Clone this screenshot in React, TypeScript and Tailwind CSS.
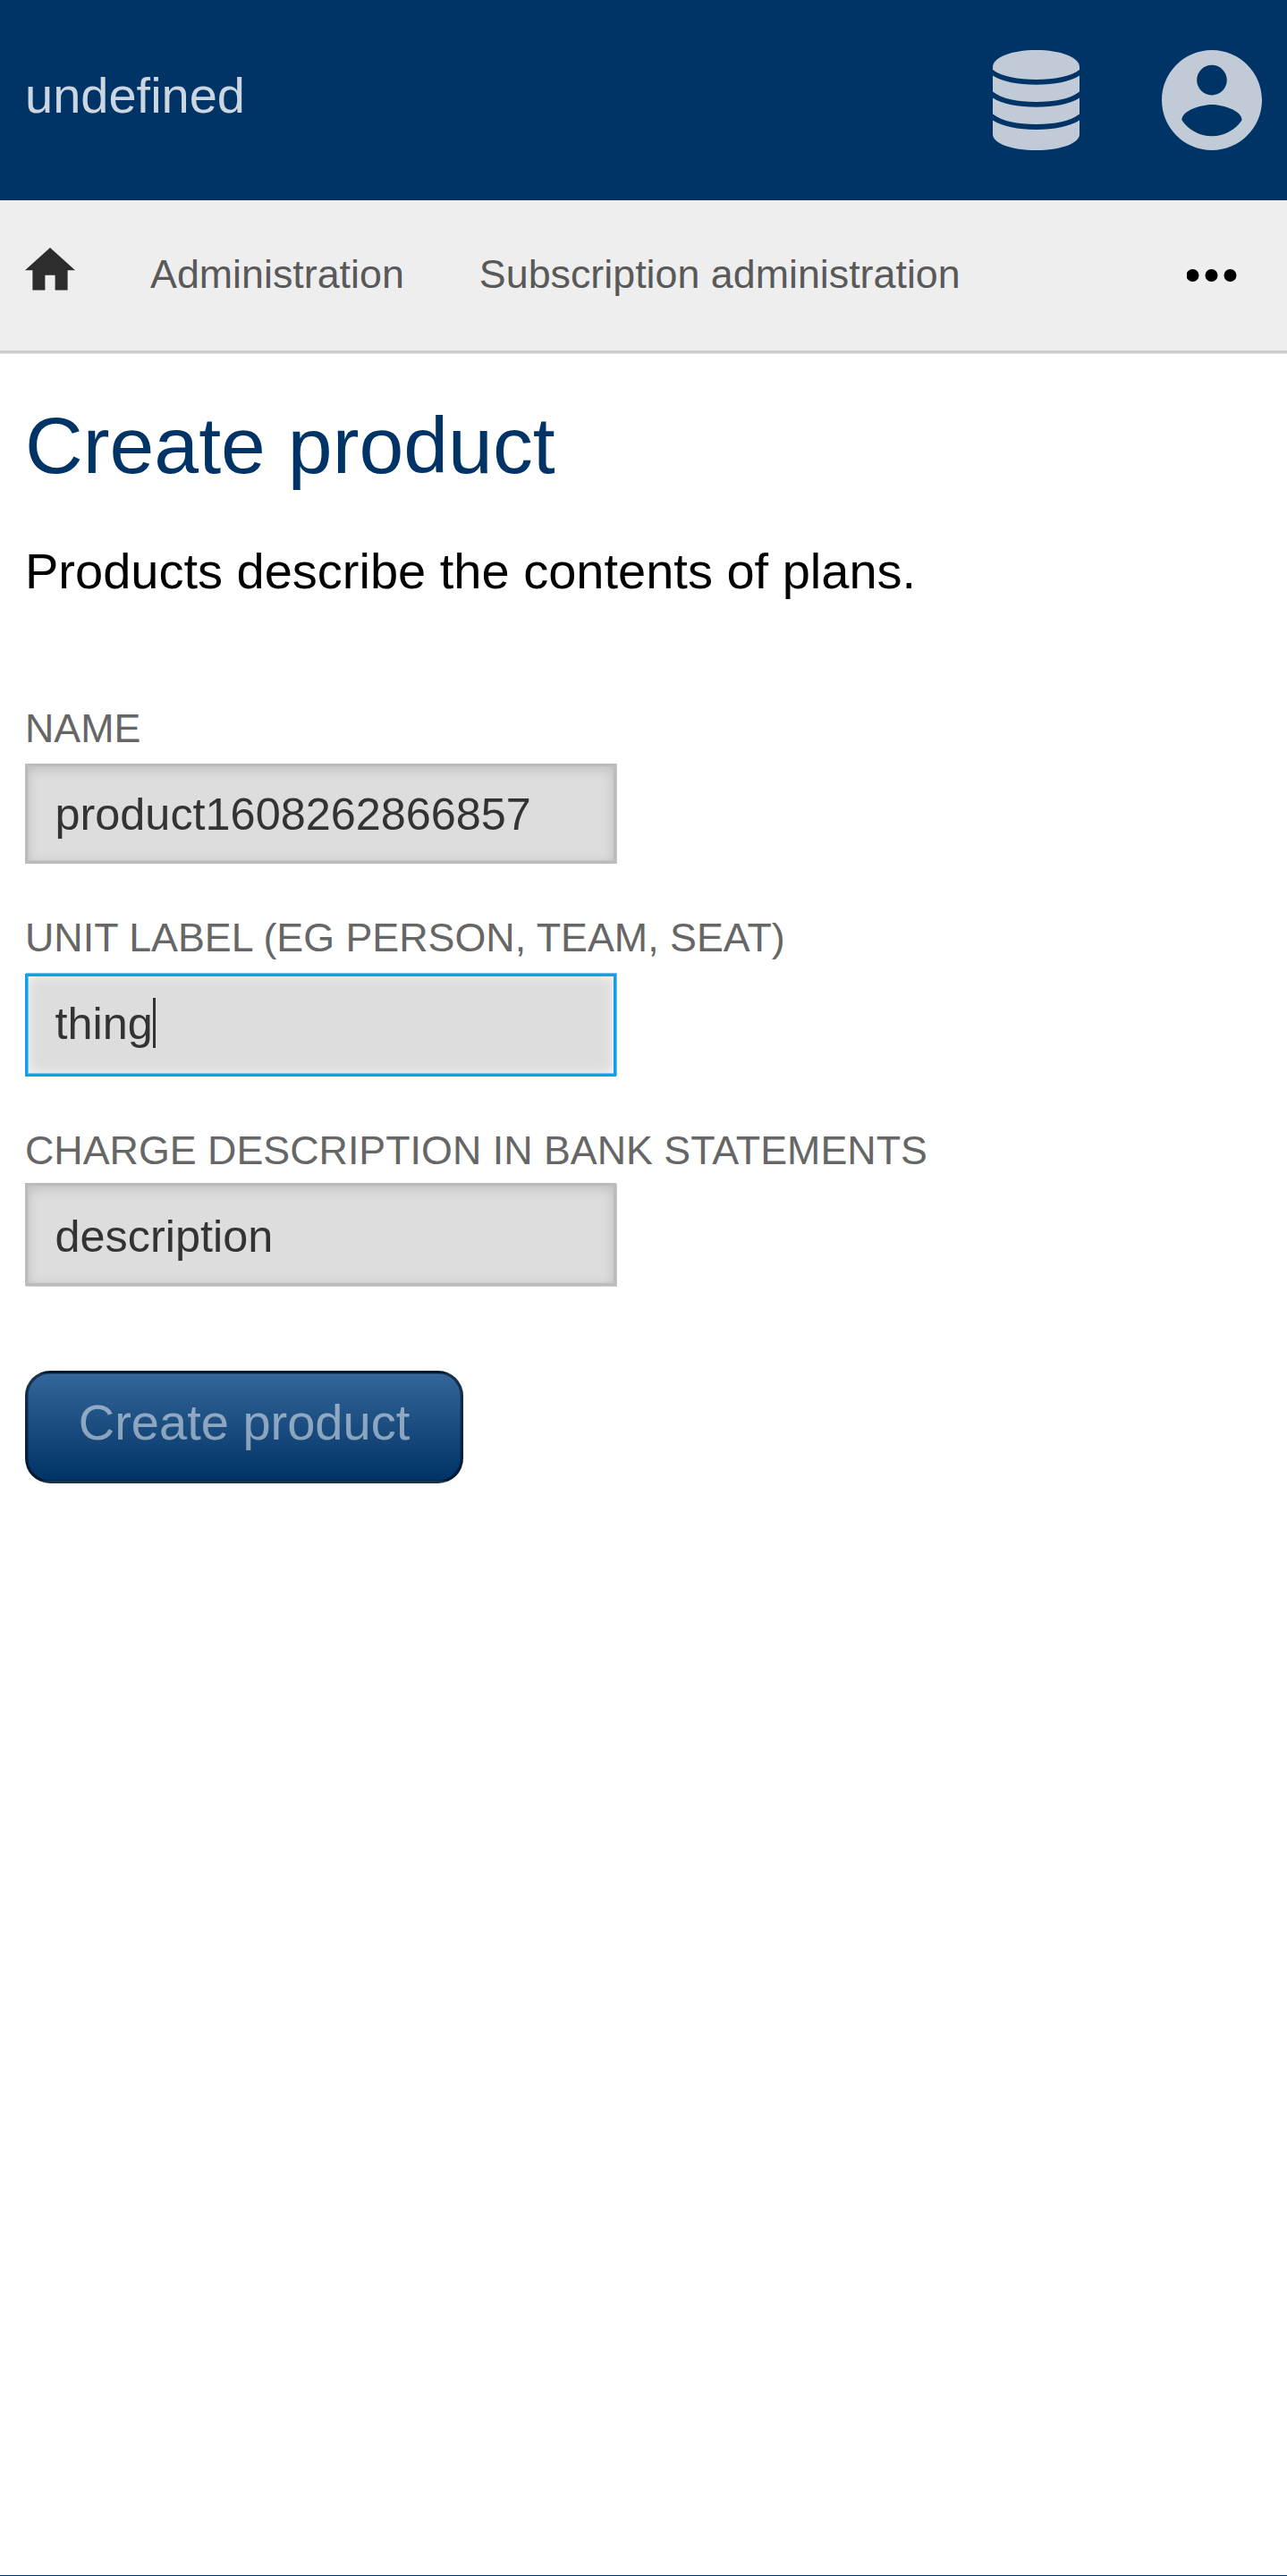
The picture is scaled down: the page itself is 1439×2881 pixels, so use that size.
import React from "react";

function DatabaseIcon() {
  return (
    <svg className="h-[112px] w-[97px]" viewBox="0 0 97 112" fill="currentColor">
      <path d="M0 19C0 8 21 0 48.5 0S97 8 97 19V22C87 29.5 69 33 48.5 33S10 29.5 0 22Z" />
      <path d="M0 28.5C11 35.5 28 38.7 48.5 38.7S86 35.5 97 28.5V46.5C87 54.5 69 58 48.5 58S10 54.5 0 46.5Z" />
      <path d="M0 53.5C11 60.5 28 63.7 48.5 63.7S86 60.5 97 53.5V71.5C87 79.5 69 83 48.5 83S10 79.5 0 71.5Z" />
      <path d="M0 78.5C11 85.5 28 88.9 48.5 88.9S86 85.5 97 78.5V94C97 104.5 76 112 48.5 112S0 104.5 0 94Z" />
    </svg>
  );
}

function AccountIcon() {
  return (
    <svg className="h-[112px] w-[112px]" viewBox="2 2 20 20" fill="currentColor">
      <path d="M12 2C6.48 2 2 6.48 2 12s4.48 10 10 10 10-4.48 10-10S17.52 2 12 2zm0 3c1.66 0 3 1.34 3 3s-1.34 3-3 3-3-1.34-3-3 1.34-3 3-3zm0 14.2c-2.5 0-4.71-1.28-6-3.22.03-1.99 4-3.08 6-3.08 1.99 0 5.97 1.09 6 3.08-1.29 1.94-3.5 3.22-6 3.22z" />
    </svg>
  );
}

const labelClass = "block text-[44.8px] leading-[50px] uppercase text-[#666]";
const fieldClass =
  "flex w-[661px] border-[3px] bg-[#ddd] pl-[30.5px] text-[50.4px] leading-[57px] text-[#333]";

export default function App() {
  return (
    <div className="flex h-[2881px] w-[1439px] flex-col overflow-hidden border-b border-[#003366] bg-white font-['Liberation_Sans',Arial,sans-serif] text-black">
      <header className="flex h-[224px] shrink-0 items-start justify-between bg-[#003366] pr-7 pl-7">
        <span className="mt-[75px] text-[56px] leading-[63px] text-[#ccd6e0]">undefined</span>
        <div className="mt-14 flex gap-[92px] text-[#c0cbd7]">
          <DatabaseIcon />
          <AccountIcon />
        </div>
      </header>

      <nav className="flex h-[171px] shrink-0 items-start border-b-[3px] border-[#ccc] bg-[#eee] pr-14 pl-7 text-[44.8px] leading-[50px] text-[#595959] shadow-[0_1px_0_#e5e5e5]">
        <svg className="mt-[53px] h-[47.6px] w-14" viewBox="2 3 20 17" fill="#2d2d2d">
          <path d="M10 20v-6h4v6h5v-8h3L12 3 2 12h3v8z" />
        </svg>
        <a className="mt-[57px] ml-[84px]">Administration</a>
        <a className="mt-[57px] ml-[84px]">Subscription administration</a>
        <svg className="mt-[77px] ml-auto h-3.5 w-14" viewBox="0 0 56 14" fill="#000">
          <circle cx="6.5" cy="7" r="7" />
          <circle cx="27.5" cy="7" r="7" />
          <circle cx="48.5" cy="7" r="7" />
        </svg>
      </nav>

      <main className="flex flex-col items-start px-7">
        <h1 className="mt-[51px] text-[89.6px] leading-[104px] text-[#003366]">Create product</h1>
        <p className="mt-[57px] text-[56px] leading-[63px]">Products describe the contents of plans.</p>

        <label className={`${labelClass} mt-[119px]`}>Name</label>
        <div className={`${fieldClass} mt-[15px] h-[112px] border-[#bbb] pt-[25px] shadow-[1px_0_0_#ccc,inset_1px_-1px_0_#c4c4c4,inset_0_3px_14px_rgba(0,0,0,0.15)]`}>
          product1608262866857
        </div>

        <label className={`${labelClass} mt-[57px]`}>Unit label (eg person, team, seat)</label>
        <div className={`${fieldClass} mt-[16px] h-[115px] border-[#11a0e8] pt-[24px] shadow-[1px_-1px_0_#76c3ec,inset_1px_-1px_0_#76c3ec,inset_0_0_14px_rgba(255,255,255,0.75)]`}>
          thing
          <span className="h-14 w-[3.5px] bg-[#333]" />
        </div>

        <label className={`${labelClass} mt-[57px]`}>Charge description in bank statements</label>
        <div className={`${fieldClass} mt-[12px] h-[115px] border-[#bbb] pt-[28px] shadow-[1px_1px_0_#ccc,inset_1px_0_0_#c4c4c4,inset_0_3px_14px_rgba(0,0,0,0.15)]`}>
          description
        </div>

        <button className="mt-[95px] h-[126px] w-[490px] rounded-[28px] border-[3.5px] border-black/50 bg-linear-to-b from-[#336699] to-[#003366] pb-[11px] text-[56px] leading-[63px] text-white/50 shadow-[inset_0_0_0_0.5px_rgba(0,0,0,0.4)]">
          Create product
        </button>
      </main>
    </div>
  );
}
